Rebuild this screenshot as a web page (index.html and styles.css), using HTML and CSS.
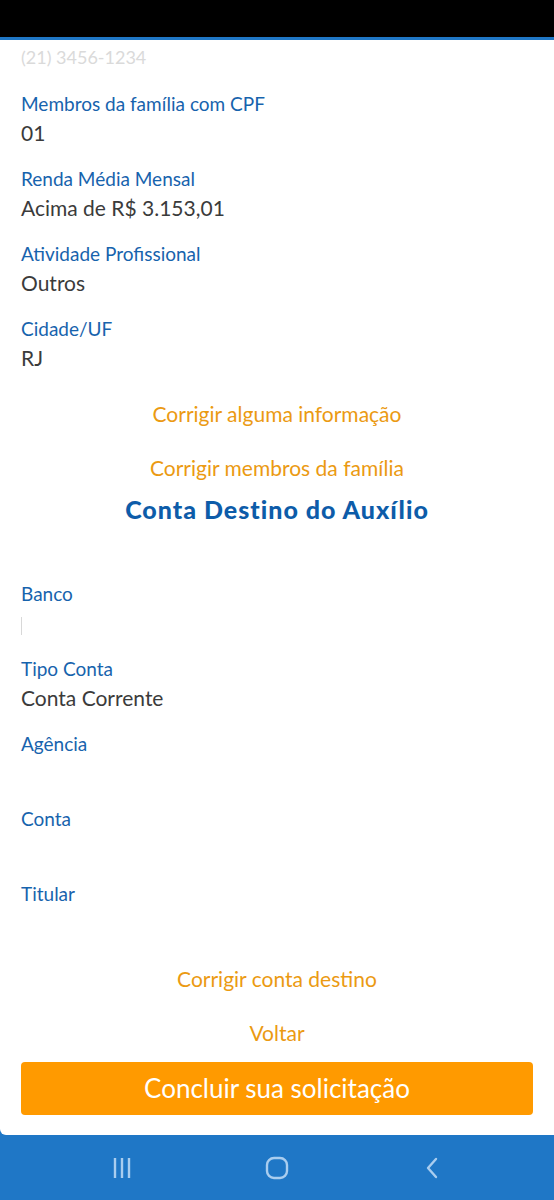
FILE: index.html
```html
<!DOCTYPE html>
<html lang="pt-BR">
<head>
    <meta charset="UTF-8">
    <meta name="viewport" content="width=device-width, initial-scale=1.0">
    <title>Auxílio - Confirmação</title>
    <link rel="stylesheet" href="styles.css">
</head>
<body>
    <div class="status-bar"></div>

    <div class="screen">
        <div class="content">
            <div class="value faint first-value">(21) 3456-1234</div>

            <div class="field">
                <div class="label">Membros da família com CPF</div>
                <div class="value">01</div>
            </div>
            <div class="field">
                <div class="label">Renda Média Mensal</div>
                <div class="value">Acima de R$ 3.153,01</div>
            </div>
            <div class="field">
                <div class="label">Atividade Profissional</div>
                <div class="value">Outros</div>
            </div>
            <div class="field">
                <div class="label">Cidade/UF</div>
                <div class="value">RJ</div>
            </div>

            <a href="#" class="link link-first">Corrigir alguma informação</a>
            <a href="#" class="link">Corrigir membros da família</a>

            <h2 class="section-title">Conta Destino do Auxílio</h2>

            <div class="field">
                <div class="label">Banco</div>
                <div class="value hidden-value"><span class="caret"></span></div>
            </div>
            <div class="field">
                <div class="label">Tipo Conta</div>
                <div class="value">Conta Corrente</div>
            </div>
            <div class="field">
                <div class="label">Agência</div>
                <div class="value hidden-value"></div>
            </div>
            <div class="field">
                <div class="label">Conta</div>
                <div class="value hidden-value"></div>
            </div>
            <div class="field field-last">
                <div class="label">Titular</div>
                <div class="value hidden-value"></div>
                <div class="value hidden-value"></div>
            </div>

            <a href="#" class="link link-account">Corrigir conta destino</a>
            <a href="#" class="link">Voltar</a>

            <button class="btn-finish">Concluir sua solicitação</button>
        </div>
    </div>

    <div class="nav-bar">
        <svg class="nav-icon" width="24" height="24" viewBox="0 0 24 24">
            <path d="M5 2v20M12 2v20M19 2v20" stroke="#a9cdef" stroke-width="2.4" fill="none"/>
        </svg>
        <svg class="nav-icon" width="24" height="24" viewBox="0 0 24 24">
            <rect x="2" y="2" width="20" height="20" rx="7" stroke="#a9cdef" stroke-width="2.4" fill="none"/>
        </svg>
        <svg class="nav-icon" width="24" height="24" viewBox="0 0 24 24">
            <path d="M16 3l-8 9 8 9" stroke="#a9cdef" stroke-width="2.4" fill="none" stroke-linecap="round" stroke-linejoin="round"/>
        </svg>
    </div>
</body>
</html>
```

FILE: styles.css
```css
body {
    font-family: Lato, "Noto Sans", sans-serif;
    margin: 0;
    padding: 0;
    background-color: #1f77c6;
    width: 554px;
    height: 1200px;
    overflow: hidden;
}
.status-bar {
    height: 37px;
    background: #000000;
    border-bottom: 3px solid #1f77c6;
}
.screen {
    height: 1095px;
    overflow: hidden;
    background: #ffffff;
    border-bottom-left-radius: 6px;
}
.content {
    padding: 3px 21px 0;
}
.field {
    margin-bottom: 17px;
}
.label {
    color: #1763ad;
    font-size: 19px;
    line-height: 29px;
}
.value {
    color: #3b3b3b;
    font-size: 21px;
    line-height: 29px;
    height: 29px;
}
.first-value {
    margin-bottom: 17px;
}
.faint {
    color: #dadada;
    font-size: 18px;
}
.hidden-value {
    color: transparent;
}
.caret {
    display: inline-block;
    width: 1px;
    height: 18px;
    background: #d8d8d8;
    vertical-align: middle;
}
.field-last {
    margin-bottom: 0;
}
.link {
    display: block;
    text-align: center;
    color: #eb9a12;
    font-size: 21px;
    line-height: 29px;
    text-decoration: none;
    margin-bottom: 25px;
}
.link-first {
    margin-top: 27px;
}
.link-account {
    margin-top: -2px;
}
.section-title {
    text-align: center;
    color: #0d5ca9;
    font-size: 25px;
    font-weight: 900;
    letter-spacing: 1px;
    line-height: 30px;
    margin: -13px 0 55px;
}
.btn-finish {
    display: block;
    width: 100%;
    height: 53px;
    margin-top: -10.5px;
    background: #ff9a00;
    color: #ffffff;
    border: none;
    border-radius: 4px;
    font-family: Lato, "Noto Sans", sans-serif;
    font-size: 26px;
}
.nav-bar {
    height: 65px;
    display: flex;
    justify-content: center;
    align-items: center;
    gap: 131px;
}
```
